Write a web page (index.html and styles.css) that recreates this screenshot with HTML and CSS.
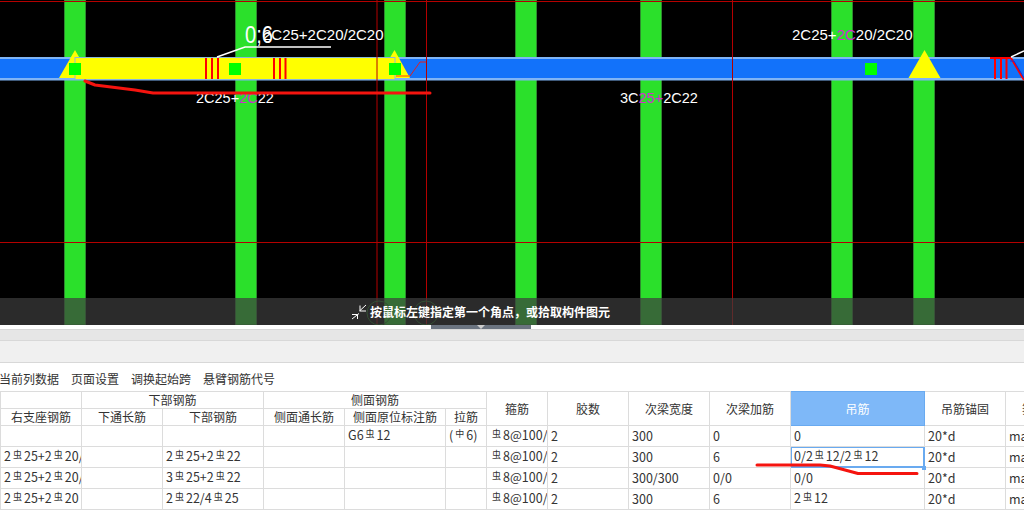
FILE: index.html
```html
<!DOCTYPE html>
<html lang="zh-CN">
<head>
<meta charset="utf-8">
<title>梁平法表格</title>
<link rel="stylesheet" href="styles.css">
</head>
<body>
<div class="page">
  <section class="viewport">
    <svg class="drawing" width="1024" height="325" viewBox="0 0 1024 325">
      <rect class="col" x="64.500" y="0" width="21" height="325"/>
      <rect class="col" x="235.500" y="0" width="21" height="325"/>
      <rect class="col" x="384.500" y="0" width="21" height="325"/>
      <rect class="col" x="515.500" y="0" width="21" height="325"/>
      <rect class="col" x="640.500" y="0" width="21" height="325"/>
      <rect class="col" x="831.500" y="0" width="21" height="325"/>
      <rect class="col" x="913.500" y="0" width="21" height="325"/>

      <rect class="beam-edge" x="0" y="57" width="1024" height="23.500"/>
      <rect class="beam" x="0" y="59" width="1024" height="19"/>

      <polygon class="tri" points="75,50 59,78 91,78"/>
      <polygon class="tri" points="394.500,50 378,78 410,78"/>
      <polygon class="tri" points="924.500,50 908.500,78 940.500,78"/>

      <rect class="span-edge" x="74.500" y="57" width="321" height="23"/>
      <rect class="span" x="75.500" y="58" width="319" height="21"/>

      <g class="stirrup">
        <path d="M206 58V79M212 58V79M218 58V79M274 58V79M280 58V79M285.500 58V79"/>
        <path d="M995 58V79M1001 58V79M1006.500 58V79M990 58H1011"/>
        <path d="M1011 58L1024 80"/>
      </g>
      <path class="brace-blue" d="M1010 61H1014L1024 78"/>
      <path class="orange" d="M396 76H410"/>
      <path class="thin-red" d="M410 76L420 62H426"/>

      <rect class="node" x="69" y="63" width="12" height="12"/>
      <rect class="node" x="229" y="63" width="12" height="12"/>
      <rect class="node" x="389" y="63" width="12" height="12"/>
      <rect class="node" x="865" y="63" width="12" height="12"/>

      <path class="axis" d="M0 1.500H1024M0 242.500H1024M377 0V325M426.500 0V325M732.500 0V325"/>
      <path class="leader" d="M217 57L245 47H331"/>
      <path class="leader" d="M1011 57L1024 51"/>

      <text class="label big" x="245" y="43" textLength="28" lengthAdjust="spacingAndGlyphs">0;6</text>
      <text class="label" x="263" y="40">2C25+2C20/2C20</text>
      <text class="label small" x="196" y="103">2C25+<tspan class="pink">2C</tspan>22</text>
      <text class="label small" x="620" y="103">3C<tspan class="pink">25+</tspan>2C22</text>
      <text class="label" x="792" y="40">2C25+<tspan class="pink">2C</tspan>20/2C20</text>

      <g class="bubble">
        <circle cx="379" cy="313" r="12"/>
        <circle cx="426" cy="313" r="12"/>
      </g>
    </svg>

    <div class="hint">
      <svg class="hint-icon" width="16" height="16" viewBox="0 0 16 16">
        <path d="M1 15L8 9.500M1 10.500H6.500V15"/>
        <path d="M15 1L8.500 7M9 1.500V7H15"/>
      </svg>
      <span>按鼠标左键指定第一个角点，或拾取构件图元</span>
    </div>
  </section>

  <div class="splitter"><div class="grip"><i class="grip-arrow"></i></div></div>
  <div class="tabs-band"></div>
  <div class="ribbon-band"></div>

  <nav class="toolbar">
    <span>当前列数据</span>
    <span>页面设置</span>
    <span>调换起始跨</span>
    <span>悬臂钢筋代号</span>
  </nav>

  <table class="grid">
    <colgroup>
      <col class="w81"><col class="w81"><col class="w101"><col class="w81"><col class="w101"><col class="w41"><col class="w61"><col class="w81"><col class="w81"><col class="w81"><col class="w134"><col class="w81"><col class="w81">
    </colgroup>
    <thead>
      <tr class="head-a">
        <th></th>
        <th colspan="2">下部钢筋</th>
        <th colspan="3">侧面钢筋</th>
        <th rowspan="2">箍筋</th>
        <th rowspan="2">胶数</th>
        <th rowspan="2">次梁宽度</th>
        <th rowspan="2">次梁加筋</th>
        <th rowspan="2" class="active">吊筋</th>
        <th rowspan="2">吊筋锚固</th>
        <th rowspan="2">箍筋加密</th>
      </tr>
      <tr class="head-b">
        <th>右支座钢筋</th>
        <th>下通长筋</th>
        <th>下部钢筋</th>
        <th>侧面通长筋</th>
        <th>侧面原位标注筋</th>
        <th>拉筋</th>
      </tr>
    </thead>
    <tbody>
      <tr>
        <td></td><td></td><td></td><td></td>
        <td>G6<b>虫</b>12</td>
        <td>(<b>中</b>6)</td>
        <td><b>虫</b>8@100/200(2)</td>
        <td>2</td><td>300</td><td>0</td><td>0</td><td>20*d</td><td>max(20*d,300)</td>
      </tr>
      <tr>
        <td>2<b>虫</b>25+2<b>虫</b>20/2<b>虫</b>20</td><td></td>
        <td>2<b>虫</b>25+2<b>虫</b>22</td><td></td><td></td><td></td>
        <td><b>虫</b>8@100/200(2)</td>
        <td>2</td><td>300</td><td>6</td>
        <td class="selected">0/2<b>虫</b>12/2<b>虫</b>12<i class="fill-handle"></i></td>
        <td>20*d</td><td>max(20*d,300)</td>
      </tr>
      <tr>
        <td>2<b>虫</b>25+2<b>虫</b>20/2<b>虫</b>20</td><td></td>
        <td>3<b>虫</b>25+2<b>虫</b>22</td><td></td><td></td><td></td>
        <td><b>虫</b>8@100/200(2)</td>
        <td>2</td><td>300/300</td><td>0/0</td><td>0/0</td><td>20*d</td><td>max(20*d,300)</td>
      </tr>
      <tr>
        <td>2<b>虫</b>25+2<b>虫</b>20</td><td></td>
        <td>2<b>虫</b>22/4<b>虫</b>25</td><td></td><td></td><td></td>
        <td><b>虫</b>8@100/200(2)</td>
        <td>2</td><td>300</td><td>6</td><td>2<b>虫</b>12</td><td>20*d</td><td>max(20*d,300)</td>
      </tr>
    </tbody>
  </table>

  <svg class="ink" width="1024" height="531" viewBox="0 0 1024 531">
    <path d="M85 81L95 85L135 90L153 93H430"/>
    <path d="M757 465H820L830 466L845 470L858 473.500H917"/>
  </svg>
</div>
</body>
</html>
```

FILE: styles.css
```css
* { box-sizing: border-box; }

html, body {
  margin: 0;
  padding: 0;
  background: #fff;
}

.page {
  position: relative;
  width: 1024px;
  height: 531px;
  overflow: hidden;
  font-family: "Noto Sans CJK SC", "Noto Sans", sans-serif;
  font-size: 12px;
  color: #333;
}

.viewport {
  position: relative;
  height: 325px;
  background: #000;
}

.drawing { display: block; }

.col { fill: #2be02b; stroke: #2f8a2f; stroke-width: 1; }
.beam-edge { fill: #7fb4f5; }
.beam { fill: #1272fa; }
.tri { fill: #ffff00; }
.span-edge { fill: #8ab8d8; }
.span { fill: #ffff00; }
.node { fill: #00ff00; }

.stirrup path { fill: none; stroke: #ff0000; stroke-width: 2; }
.brace-blue { fill: none; stroke: #1030e0; stroke-width: 1; }
.orange { fill: none; stroke: #ff8000; stroke-width: 1.500; }
.thin-red { fill: none; stroke: #e02020; stroke-width: 1; }
.axis { fill: none; stroke: #b40000; stroke-width: 1; }
.leader { fill: none; stroke: #fff; stroke-width: 1.500; }

.label {
  fill: #fff;
  font-family: "Liberation Sans", sans-serif;
  font-size: 15px;
}
.label.small { font-size: 14.500px; }
.label.big { font-size: 24px; }
.pink { fill: #d030d0; }

.bubble circle { fill: none; stroke: #1f7a1f; stroke-width: 1; }

.hint {
  position: absolute;
  left: 0;
  right: 0;
  bottom: 0;
  height: 27px;
  display: flex;
  align-items: center;
  justify-content: center;
  gap: 3px;
  padding-right: 63px;
  background: rgba(60, 60, 60, 0.715);
  color: #fff;
  font-weight: 700;
}

.hint-icon { flex: none; }
.hint-icon path { fill: none; stroke: #fff; stroke-width: 1; }

.splitter {
  height: 4px;
  background: #fff;
  display: flex;
  justify-content: center;
}

.grip {
  width: 100px;
  height: 4px;
  margin-right: 62px;
  background: #6b7480;
  display: flex;
  justify-content: center;
}

.grip-arrow {
  width: 0;
  height: 0;
  border-left: 4px solid transparent;
  border-right: 4px solid transparent;
  border-top: 4px solid #ccc;
}

.tabs-band {
  height: 12px;
  background: #e6e6e6;
  border-top: 1px solid #d8d8d8;
  border-bottom: 1px solid #d8d8d8;
}

.ribbon-band {
  height: 22px;
  background: #f0f0f0;
  border-bottom: 1px solid #d8d8d8;
}

.toolbar {
  height: 28px;
  margin-left: -1px;
  display: flex;
  align-items: center;
  gap: 12px;
  padding-top: 2px;
}

.grid {
  width: 1086px;
  table-layout: fixed;
  border-collapse: collapse;
  line-height: 16px;
}

.w41 { width: 41px; }
.w61 { width: 61px; }
.w81 { width: 81px; }
.w101 { width: 101px; }
.w134 { width: 134px; }

.grid th, .grid td {
  border: 1px solid #dcdcdc;
  padding: 0;
  overflow: hidden;
  white-space: nowrap;
}

.grid th {
  font-weight: 400;
  text-align: center;
}

.head-a { height: 17px; }
.head-b { height: 17px; }

.grid th.active {
  background: #7eb8f8;
  border-color: #69aaf0;
  color: #fff;
}

.grid td {
  height: 21px;
  padding-left: 3px;
  font-size: 12.500px;
}

.grid td b {
  font-weight: 400;
  font-size: 9px;
  margin: 0 2px;
  position: relative;
  top: -3px;
}

.grid td.selected {
  position: relative;
  overflow: visible;
  box-shadow: inset 0 0 0 1px #69aaf0;
  border: 1px solid #69aaf0;
}

.fill-handle {
  position: absolute;
  right: -2px;
  bottom: -3px;
  width: 4px;
  height: 4px;
  background: #69aaf0;
}

.ink {
  position: absolute;
  left: 0;
  top: 0;
  pointer-events: none;
}

.ink path {
  fill: none;
  stroke: #f5140f;
  stroke-width: 3;
  stroke-linejoin: round;
  stroke-linecap: round;
}
```
